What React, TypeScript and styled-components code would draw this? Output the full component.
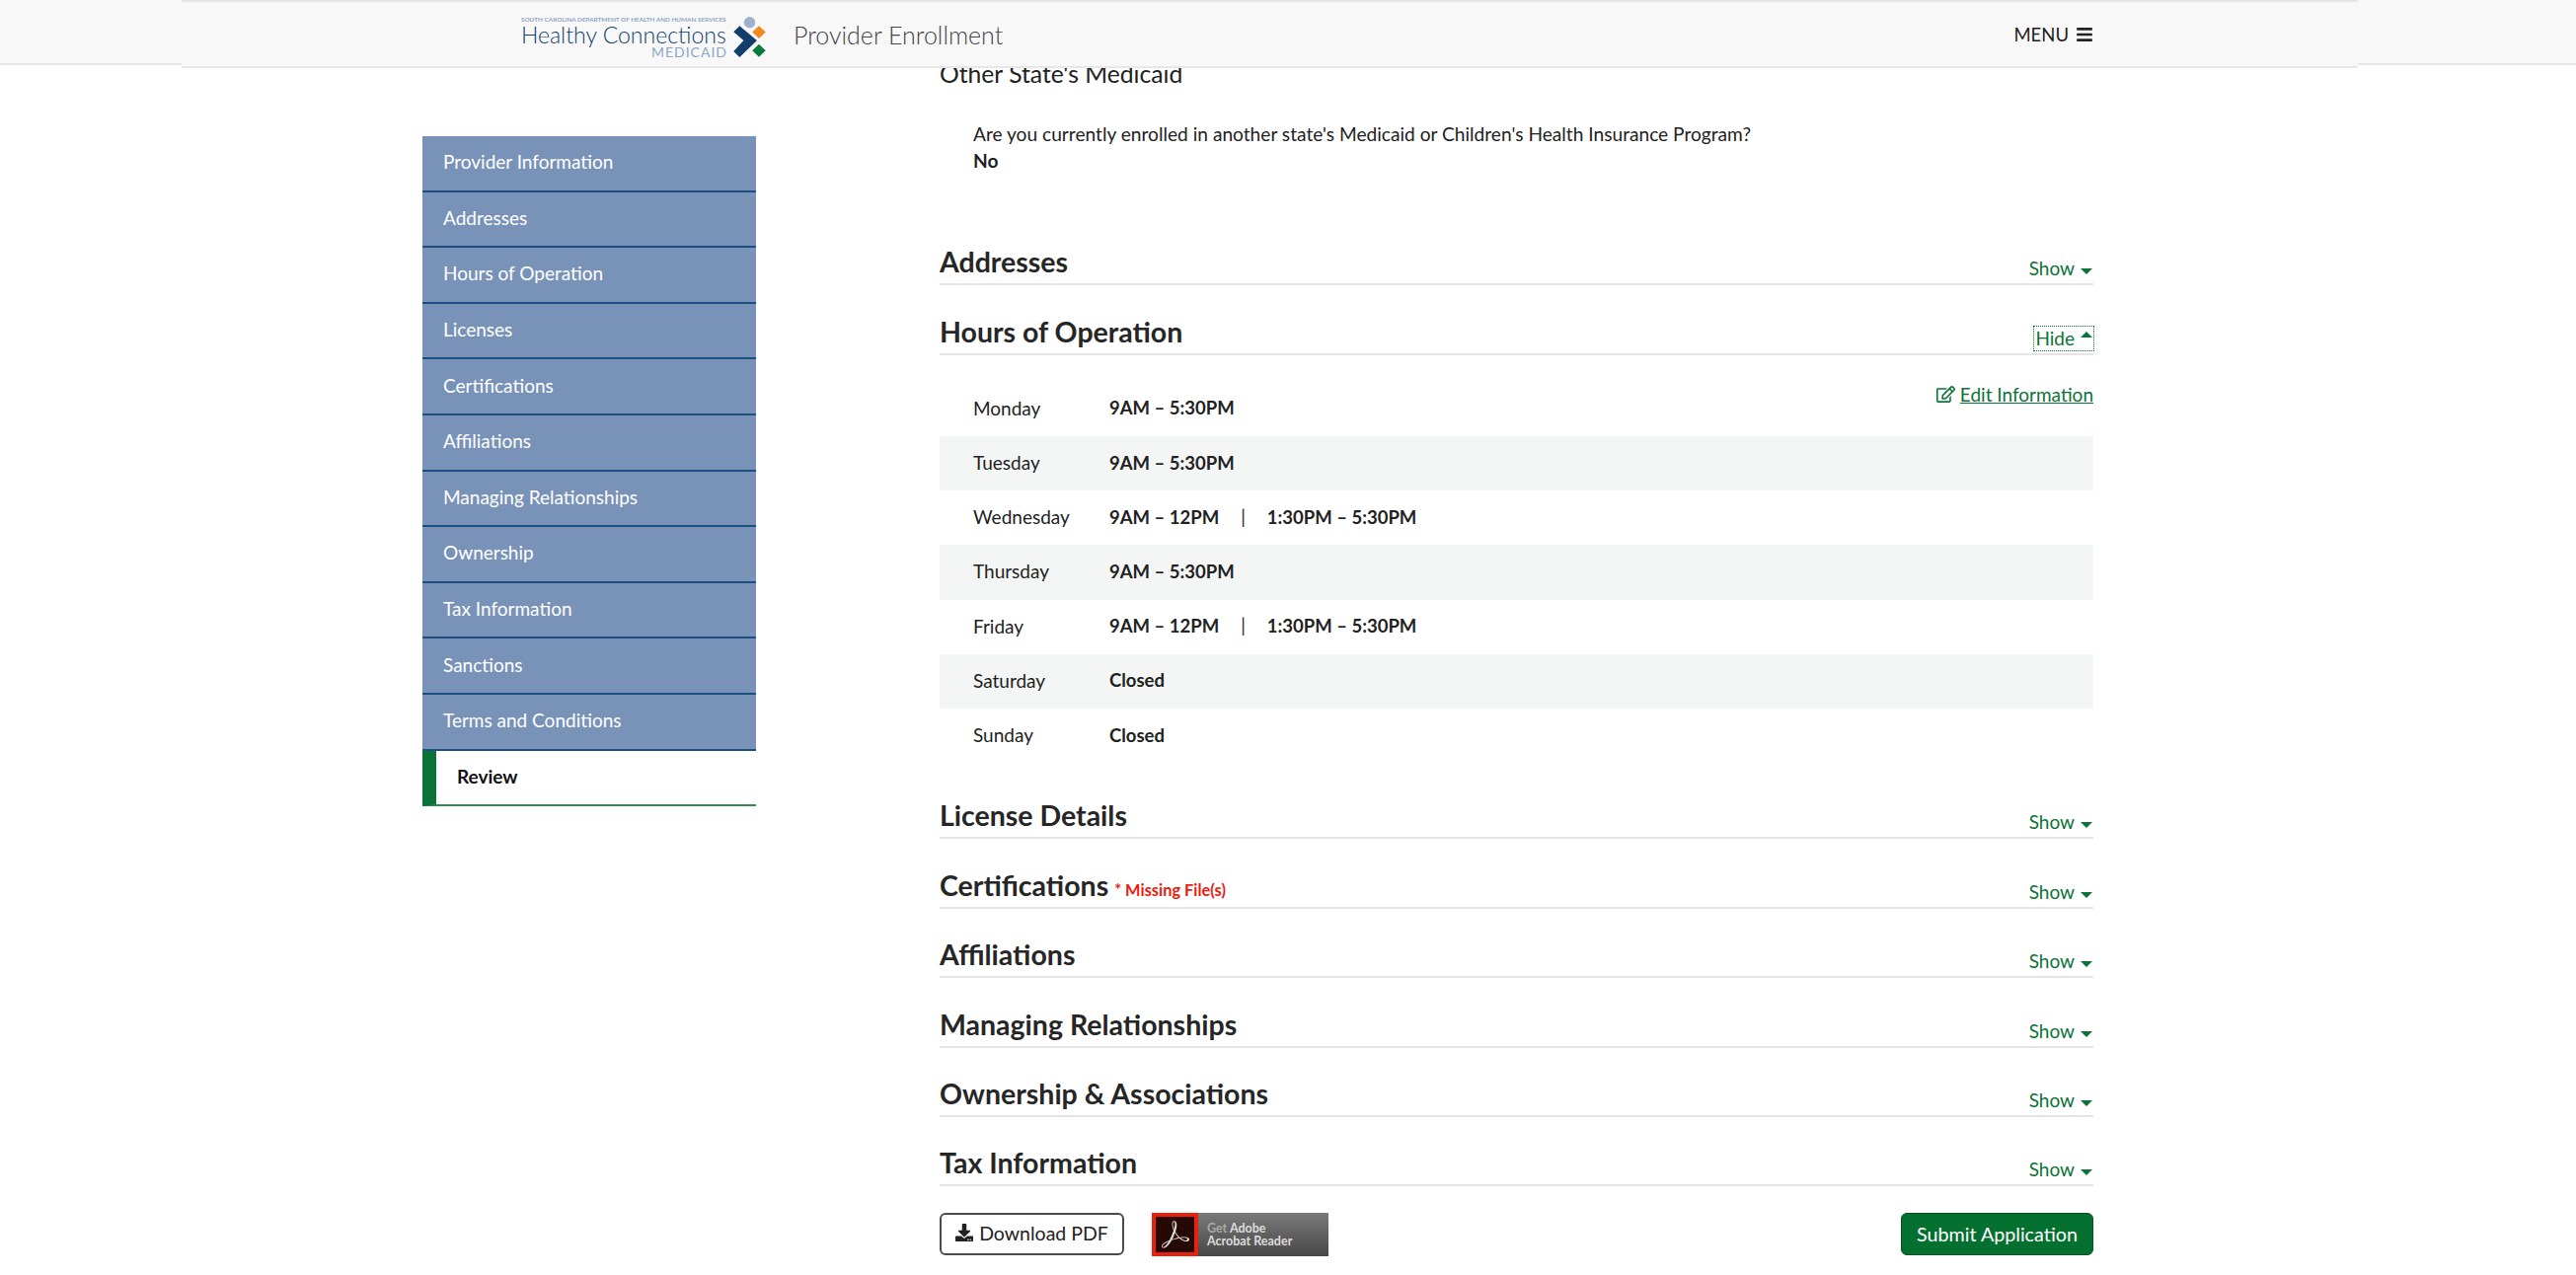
import React from 'react';
import styled, { createGlobalStyle } from 'styled-components';
import { FaBars, FaDownload, FaRegEdit } from 'react-icons/fa';
import { SiAdobeacrobatreader } from 'react-icons/si';

const green = '#0b7337';

const GlobalStyle = createGlobalStyle`
  html, body {
    margin: 0;
    padding: 0;
    background: #fff;
    overflow: hidden;
  }
  body {
    font-family: Lato, "Open Sans", sans-serif;
    color: #222;
  }
`;

const Page = styled.div`
  width: 2610px;
  height: 1292px;
  overflow: hidden;
`;

const Header = styled.header`
  position: fixed;
  top: 0;
  left: 0;
  right: 0;
  height: 64px;
  background: #f8f8f8;
  border-bottom: 2px solid #e7e7e7;
  z-index: 10;
`;

const HeaderInner = styled.div`
  width: 2205px;
  height: 69px;
  box-sizing: border-box;
  margin-left: 184px;
  padding: 0 268px 0 344px;
  background: #f8f8f8;
  border-top: 2px solid #e7e7e7;
  border-bottom: 2px solid #e7e7e7;
  display: flex;
  align-items: center;
`;

const Logo = styled.div`
  display: flex;
  align-items: center;
  gap: 5px;
  width: 276px;
`;

const LogoText = styled.div`
  width: 209px;
  padding-top: 6px;
  display: flex;
  flex-direction: column;
  color: #123e6b;
`;

const LogoDept = styled.div`
  font-size: 6.35px;
  line-height: 8px;
  color: #8fa5c5;
  white-space: nowrap;
  font-weight: 700;
`;

const LogoName = styled.div`
  font-size: 23px;
  line-height: 22px;
  font-weight: 300;
  white-space: nowrap;
`;

const LogoSub = styled.div`
  font-size: 14px;
  line-height: 14px;
  color: #8fa5c5;
  text-align: right;
  letter-spacing: 1px;
`;

const LogoSvg = styled.svg`
  margin-top: 7px;
  flex: none;
`;

const AppTitle = styled.div`
  font-size: 25px;
  font-weight: 300;
  color: #444;
  white-space: nowrap;
`;

const MenuButton = styled.div`
  margin-left: auto;
  display: flex;
  align-items: center;
  gap: 7px;
  font-size: 18.5px;
  color: #222;
  font-weight: 400;
`;

const Layout = styled.div`
  display: flex;
  gap: 186px;
  padding-left: 428px;
`;

const Sidebar = styled.nav`
  width: 338px;
  margin-top: 138px;
  flex: none;
`;

const NavItem = styled.div<{ $active?: boolean }>`
  height: 56.6px;
  box-sizing: border-box;
  display: flex;
  align-items: center;
  font-size: 19px;
  padding: 0 0 3px 21px;
  background: ${p => (p.$active ? '#fff' : '#7892b8')};
  color: ${p => (p.$active ? '#111' : '#fff')};
  font-weight: ${p => (p.$active ? 700 : 400)};
  border-bottom: 2px solid ${p => (p.$active ? '#2e8b4e' : '#1d4f80')};
  border-left: ${p => (p.$active ? `14px solid ${green}` : '0')};
`;

const Main = styled.main`
  width: 1169px;
  padding-top: 59px;
`;

const SubTitle = styled.h3`
  margin: 0;
  font-size: 24.7px;
  line-height: 32px;
  font-weight: 400;
  color: #222;
`;

const Question = styled.div`
  margin: 31px 0 43px 34px;
  font-size: 19.15px;
  line-height: 27px;
`;

const Answer = styled.div`
  font-weight: 700;
`;

const Section = styled.section`
  height: 70.4px;
  box-sizing: border-box;
  border-bottom: 2px solid #e5e5e5;
  display: flex;
  align-items: flex-end;
  justify-content: space-between;
`;

const SectionTitle = styled.h2`
  margin: 0 0 4px;
  font-size: 28.5px;
  line-height: 36px;
  font-weight: 700;
  color: #262626;
  display: flex;
  align-items: baseline;
  gap: 6px;
`;

const Missing = styled.span`
  font-size: 16.4px;
  line-height: 1;
  color: #f01a10;
`;

const Toggle = styled.button<{ $focused?: boolean }>`
  all: unset;
  display: flex;
  align-items: center;
  gap: 6px;
  margin-bottom: 3px;
  padding: 0 1px;
  font-size: 19px;
  line-height: 24px;
  color: ${green};
  outline: ${p => (p.$focused ? `1px dotted ${green}` : 'none')};
`;

const Caret = styled.span<{ $up?: boolean }>`
  width: 0;
  height: 0;
  border-left: 6px solid transparent;
  border-right: 6px solid transparent;
  ${p => (p.$up ? `border-bottom: 6px solid ${green}; margin-bottom: 8px;` : `border-top: 6px solid ${green}; margin-top: 6px;`)}
`;

const Hours = styled.div`
  margin: 27px 0 7px;
`;

const Row = styled.div<{ $striped: boolean }>`
  height: 55.2px;
  box-sizing: border-box;
  display: flex;
  align-items: center;
  padding: 0 0 2px 34px;
  font-size: 19px;
  background: ${p => (p.$striped ? '#f4f6f5' : 'transparent')};
`;

const Day = styled.div`
  width: 138px;
`;

const Times = styled.div`
  display: flex;
  gap: 22px;
  font-size: 18.5px;
  font-weight: 700;
`;

const Separator = styled.span`
  font-weight: 400;
`;

const EditLink = styled.a`
  margin: -28px 0 0 auto;
  display: flex;
  align-items: center;
  gap: 5px;
  color: ${green};
  text-decoration: underline;
  font-size: 19px;
`;

const Footer = styled.div`
  margin-top: 26.5px;
  display: flex;
  align-items: flex-start;
`;

const DownloadButton = styled.button`
  all: unset;
  width: 187px;
  height: 43px;
  box-sizing: border-box;
  border: 2px solid #4a4a4a;
  border-radius: 6px;
  padding-bottom: 2px;
  display: flex;
  align-items: center;
  justify-content: center;
  gap: 6px;
  font-size: 19.5px;
  color: #222;
`;

const AcrobatBadge = styled.div`
  margin-left: 28px;
  width: 179px;
  height: 44px;
  display: flex;
  background: linear-gradient(#7a7a7a, #474747);
`;

const AcrobatIcon = styled.div`
  width: 47px;
  box-sizing: border-box;
  border: 4px solid #e8200e;
  background: #260804;
  color: #ddd;
  display: flex;
  align-items: center;
  justify-content: center;
`;

const AcrobatText = styled.div`
  padding-left: 9px;
  font-size: 12.5px;
  line-height: 13px;
  font-weight: 700;
  color: #ddd;
  align-self: center;
`;

const AcrobatGet = styled.span`
  color: #a8a8a8;
`;

const SubmitButton = styled.button`
  all: unset;
  margin-left: auto;
  width: 195px;
  height: 43px;
  box-sizing: border-box;
  background: #04702f;
  border: 1px solid #0a4f26;
  border-radius: 6px;
  color: #fff;
  font-size: 19.7px;
  text-align: center;
  line-height: 39px;
`;

const navItems = [
  'Provider Information',
  'Addresses',
  'Hours of Operation',
  'Licenses',
  'Certifications',
  'Affiliations',
  'Managing Relationships',
  'Ownership',
  'Tax Information',
  'Sanctions',
  'Terms and Conditions',
];

const hours: [string, string[]][] = [
  ['Monday', ['9AM – 5:30PM']],
  ['Tuesday', ['9AM – 5:30PM']],
  ['Wednesday', ['9AM – 12PM', '1:30PM – 5:30PM']],
  ['Thursday', ['9AM – 5:30PM']],
  ['Friday', ['9AM – 12PM', '1:30PM – 5:30PM']],
  ['Saturday', ['Closed']],
  ['Sunday', ['Closed']],
];

const collapsedSections = ['Certifications', 'Affiliations', 'Managing Relationships', 'Ownership & Associations', 'Tax Information'];

const LogoMark = () => (
  <LogoSvg width="35" height="44" viewBox="680 50 100 130">
    <circle cx="730" cy="70" r="17" fill="#9fb1cb" />
    <path d="M758 80l20 19-20 19-20-19z" fill="#f0891f" />
    <path d="M758 135l20 19-20 19-20-19z" fill="#0b7a3b" />
    <path d="M700 80l52 44-52 50-18-18 30-32-30-26z" fill="#123e6b" />
  </LogoSvg>
);

const CollapsedSection = ({ title, missing }: { title: string; missing?: boolean }) => (
  <Section>
    <SectionTitle>
      {title}
      {missing && <Missing>* Missing File(s)</Missing>}
    </SectionTitle>
    <Toggle>
      Show <Caret />
    </Toggle>
  </Section>
);

const App: React.FC = () => (
  <Page>
    <GlobalStyle />
    <Header>
      <HeaderInner>
        <Logo>
          <LogoText>
            <LogoDept>SOUTH CAROLINA DEPARTMENT OF HEALTH AND HUMAN SERVICES</LogoDept>
            <LogoName>Healthy Connections</LogoName>
            <LogoSub>MEDICAID</LogoSub>
          </LogoText>
          <LogoMark />
        </Logo>
        <AppTitle>Provider Enrollment</AppTitle>
        <MenuButton>
          MENU <FaBars size={18} />
        </MenuButton>
      </HeaderInner>
    </Header>
    <Layout>
      <Sidebar>
        {navItems.map(item => (
          <NavItem key={item}>{item}</NavItem>
        ))}
        <NavItem $active>Review</NavItem>
      </Sidebar>
      <Main>
        <SubTitle>Other State's Medicaid</SubTitle>
        <Question>
          Are you currently enrolled in another state's Medicaid or Children's Health Insurance Program?
          <Answer>No</Answer>
        </Question>
        <CollapsedSection title="Addresses" />
        <Section>
          <SectionTitle>Hours of Operation</SectionTitle>
          <Toggle $focused>
            Hide <Caret $up />
          </Toggle>
        </Section>
        <Hours>
          {hours.map(([day, times], index) => (
            <Row key={day} $striped={index % 2 === 1}>
              <Day>{day}</Day>
              <Times>
                {times.map((time, i) => (
                  <React.Fragment key={time}>
                    {i > 0 && <Separator>|</Separator>}
                    <span>{time}</span>
                  </React.Fragment>
                ))}
              </Times>
              {index === 0 && (
                <EditLink>
                  <FaRegEdit size={19} /> Edit Information
                </EditLink>
              )}
            </Row>
          ))}
        </Hours>
        <CollapsedSection title="License Details" />
        {collapsedSections.map(title => (
          <CollapsedSection key={title} title={title} missing={title === 'Certifications'} />
        ))}
        <Footer>
          <DownloadButton>
            <FaDownload size={18} /> Download PDF
          </DownloadButton>
          <AcrobatBadge>
            <AcrobatIcon>
              <SiAdobeacrobatreader size={28} />
            </AcrobatIcon>
            <AcrobatText>
              <AcrobatGet>Get</AcrobatGet> Adobe
              <br />
              Acrobat Reader
            </AcrobatText>
          </AcrobatBadge>
          <SubmitButton>Submit Application</SubmitButton>
        </Footer>
      </Main>
    </Layout>
  </Page>
);

export default App;
